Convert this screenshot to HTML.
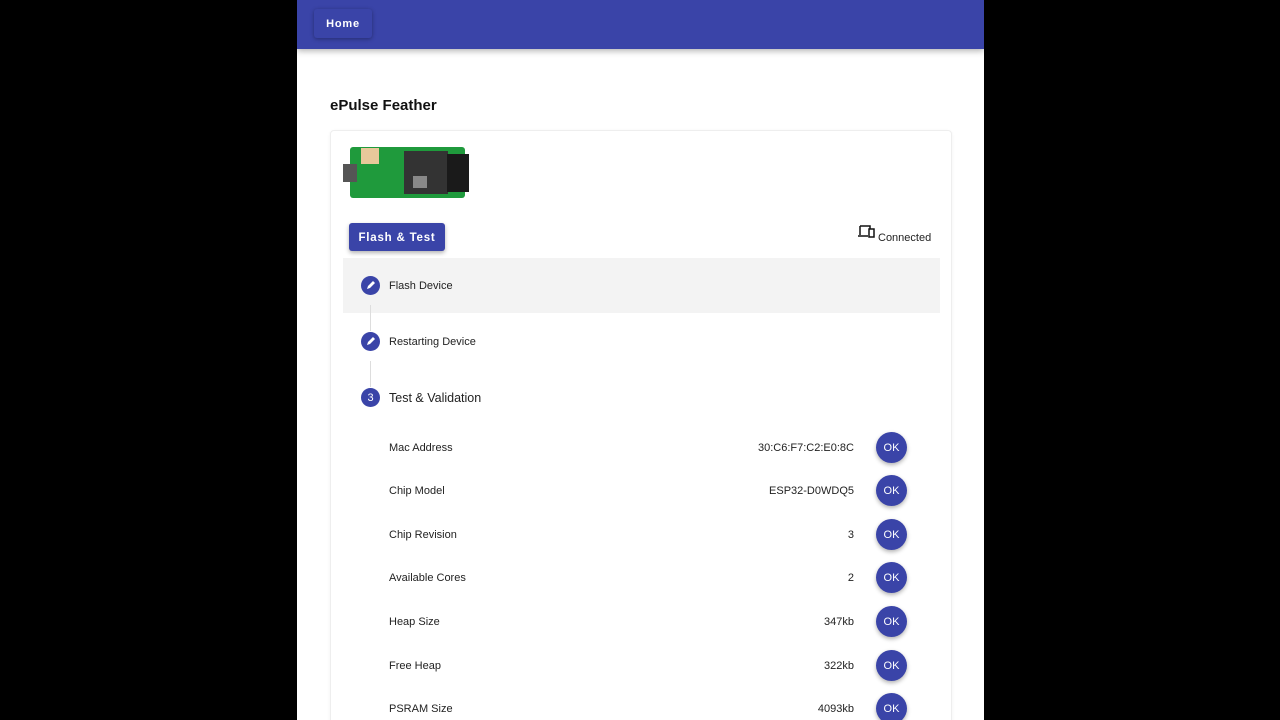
<!DOCTYPE html>
<html><head><style>
body{margin:0;width:1280px;height:720px;background:#000;overflow:hidden;font-family:"Liberation Sans",sans-serif;position:relative}
.page{position:absolute;left:297px;top:0;width:687px;height:720px;background:#fff;overflow:hidden}
.hdr{position:absolute;left:0;top:0;width:687px;height:49px;background:#3a44a8;box-shadow:0 2px 6px rgba(0,0,0,.3)}
.home{position:absolute;left:17px;top:9px;width:58px;height:29px;background:#3a44a8;box-shadow:0 1px 4px rgba(0,0,0,.35);border-radius:3px;color:#fff;font-size:11px;font-weight:bold;letter-spacing:.8px;text-align:center;line-height:31px}
.title{position:absolute;left:33px;top:97px;font-size:15px;font-weight:bold;color:#111}
.card{position:absolute;left:33px;top:130px;width:620px;height:620px;border:1px solid #eee;border-radius:4px;box-shadow:0 1px 3px rgba(0,0,0,.06)}
.btn{position:absolute;left:52px;top:223px;width:96px;height:28px;background:#3a44a8;border-radius:3px;color:#fff;font-size:11.5px;font-weight:bold;letter-spacing:.8px;text-align:center;line-height:30px;box-shadow:0 2px 4px rgba(0,0,0,.3)}
.conn{position:absolute;left:581px;top:232px;font-size:11px;color:#222}
.hl{position:absolute;left:46px;top:258px;width:597px;height:55px;background:#f3f3f3}
.step{position:absolute;left:64px;width:19px;height:19px;border-radius:50%;background:#3a44a8;color:#fff;font-size:11px;text-align:center;line-height:19px}
.sl{position:absolute;left:92px;font-size:11px;color:#222}
.vl{position:absolute;left:73px;width:1px;background:#ddd}
.row{position:absolute;left:92px;width:518px;height:20px;font-size:11px;color:#222}
.row .v{position:absolute;right:53px;top:3px}
.row .n{position:absolute;left:0;top:3px}
.ok{position:absolute;right:0;top:-7px;width:31px;height:31px;border-radius:50%;background:#3a44a8;color:#fff;font-size:11px;text-align:center;line-height:33px;box-shadow:0 2px 4px rgba(0,0,0,.3)}
</style></head><body>
<div class="page">
<div class="hdr"><div class="home">Home</div></div>
<div class="title">ePulse Feather</div>
<div class="card"></div>
<svg style="position:absolute;left:46px;top:146px" width="128" height="54">
<rect x="7" y="1" width="115" height="51" rx="3" fill="#1f9a3c"/>
<rect x="0" y="18" width="14" height="18" fill="#555"/>
<rect x="18" y="2" width="18" height="16" fill="#e8c89a"/>
<rect x="61" y="5" width="44" height="43" fill="#333"/>
<rect x="104" y="8" width="22" height="38" fill="#1a1a1a"/>
<rect x="70" y="30" width="14" height="12" fill="#888"/>
</svg>
<div class="btn">Flash &amp; Test</div>
<svg style="position:absolute;left:560px;top:225px" width="18" height="14"><path d="M3 1h10v3M3 1v9M1 11h10" stroke="#111" stroke-width="1.5" fill="none"/><rect x="12" y="4" width="5" height="8" fill="none" stroke="#111" stroke-width="1.5"/></svg>
<div class="conn">Connected</div>
<div class="hl"></div>
<div class="vl" style="top:305px;height:26px"></div>
<div class="vl" style="top:361px;height:26px"></div>
<div class="step" style="top:276px"><svg width="19" height="19"><path d="M6 13l1-3 5-5 2 2-5 5z" fill="#fff"/></svg></div>
<div class="sl" style="top:280px">Flash Device</div>
<div class="step" style="top:332px"><svg width="19" height="19"><path d="M6 13l1-3 5-5 2 2-5 5z" fill="#fff"/></svg></div>
<div class="sl" style="top:336px">Restarting Device</div>
<div class="step" style="top:388px;line-height:20px">3</div>
<div class="sl" style="top:391px;font-size:12.5px">Test &amp; Validation</div>
<div class="row" style="top:439px"><span class="n">Mac Address</span><span class="v">30:C6:F7:C2:E0:8C</span><div class="ok">OK</div></div>
<div class="row" style="top:482px"><span class="n">Chip Model</span><span class="v">ESP32-D0WDQ5</span><div class="ok">OK</div></div>
<div class="row" style="top:526px"><span class="n">Chip Revision</span><span class="v">3</span><div class="ok">OK</div></div>
<div class="row" style="top:569px"><span class="n">Available Cores</span><span class="v">2</span><div class="ok">OK</div></div>
<div class="row" style="top:613px"><span class="n">Heap Size</span><span class="v">347kb</span><div class="ok">OK</div></div>
<div class="row" style="top:657px"><span class="n">Free Heap</span><span class="v">322kb</span><div class="ok">OK</div></div>
<div class="row" style="top:700px"><span class="n">PSRAM Size</span><span class="v">4093kb</span><div class="ok">OK</div></div>
</div>
</body></html>
